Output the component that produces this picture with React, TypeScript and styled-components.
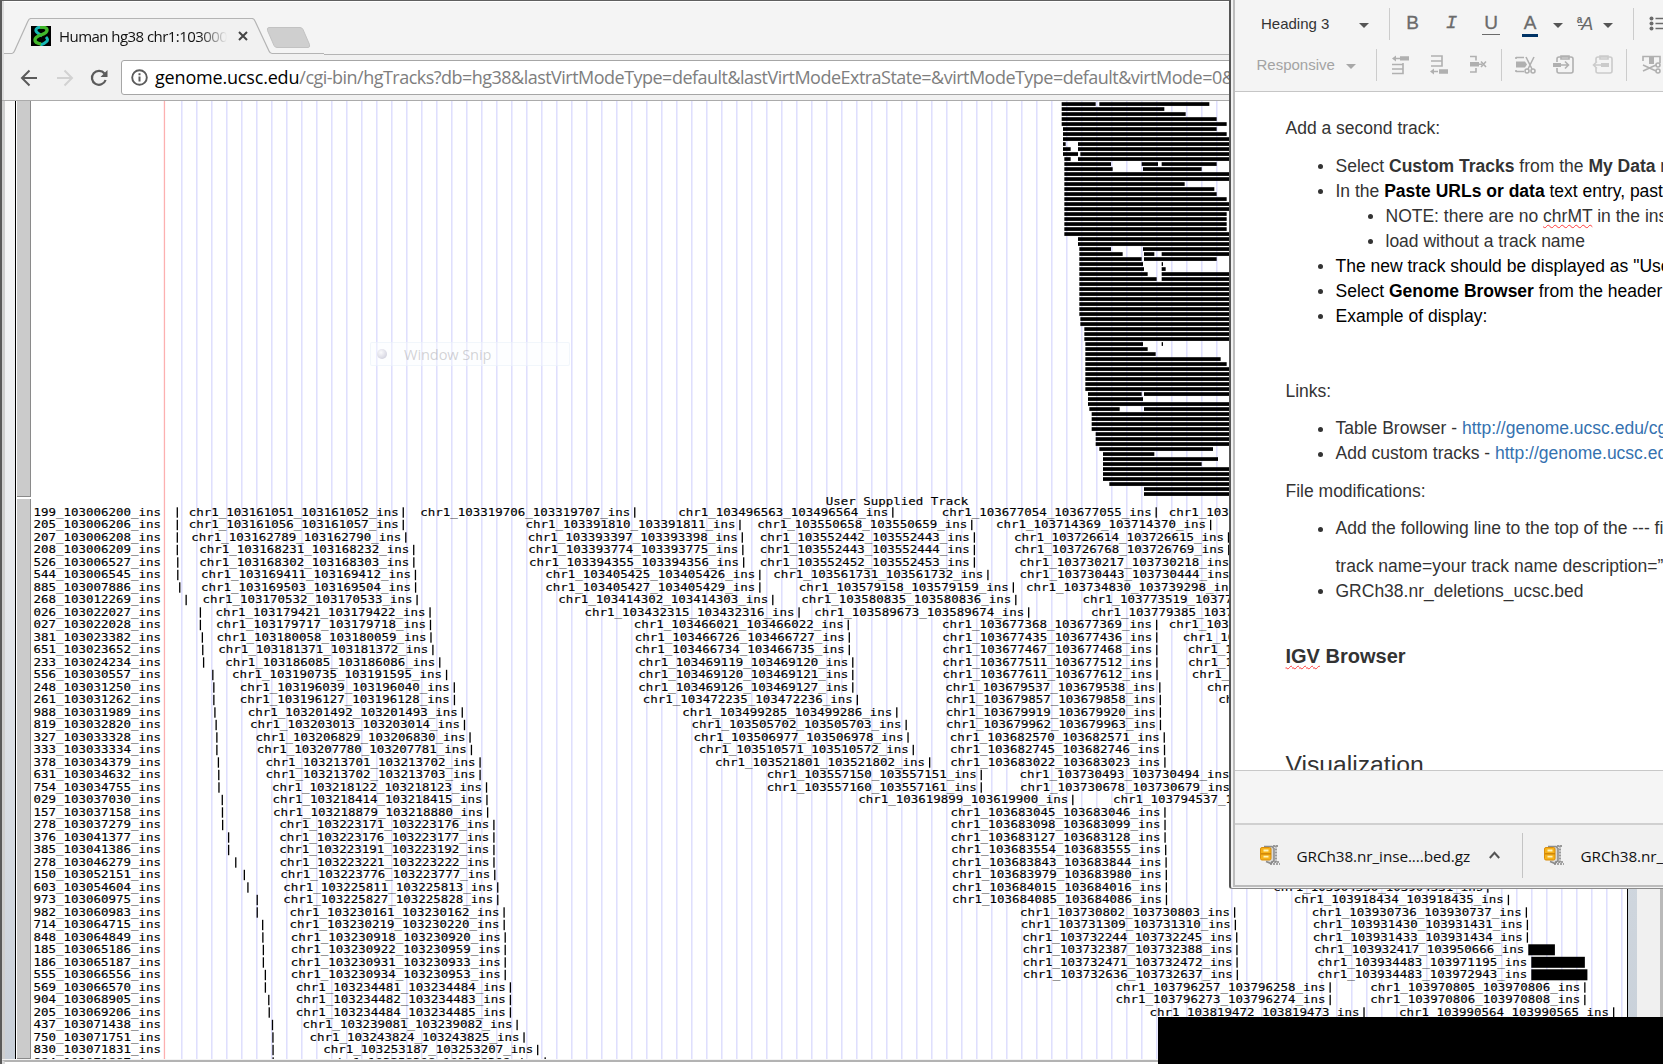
import React from 'react';
import styled, { createGlobalStyle } from 'styled-components';

const UI = '"Open Sans", "Noto Sans", sans-serif';
const ARIAL = '"Liberation Sans", Arial, sans-serif';

const GlobalStyle = createGlobalStyle`
  * { box-sizing: border-box; }
  html, body { margin: 0; padding: 0; overflow: hidden; background: #fff; }
`;

const Desktop = styled.div`
  position: relative;
  width: 1663px;
  height: 1064px;
  overflow: hidden;
  background: #f4f4f4;
`;

/* ---------- browser window ---------- */

const BrowserWindow = styled.section`
  position: absolute;
  inset: 0;
  display: flex;
  flex-direction: column;
  background: #f4f4f4;
  border-left: 2px solid #5a5a5a;
  border-top: 1px solid #5f5f5f;
`;

const TabStrip = styled.div`
  height: 54px;
  flex: none;
  display: flex;
  align-items: flex-end;
  box-shadow: inset 2px 0 #dcdcdc, inset 0 1px #fff;
`;

const TabArea = styled.div`
  position: relative;
  width: 320px;
  height: 37px;
  margin-left: 2px;
`;

const TabShape = styled.svg`
  position: absolute;
  left: 0;
  top: 0;
`;

const TabContent = styled.div`
  position: relative;
  display: flex;
  align-items: center;
  height: 36px;
  padding-left: 27px;
`;

const TabTitle = styled.span`
  width: 169px;
  margin-left: 8px;
  overflow: hidden;
  white-space: nowrap;
  font: 15px/22px ${UI};
  letter-spacing: -0.55px;
  color: #111;
  mask-image: linear-gradient(to right, #000 140px, transparent 168px);
`;

const StripLine = styled.div`
  flex: 1;
  height: 1px;
  background: #b4b4b4;
`;

const Toolbar = styled.div`
  height: 46px;
  flex: none;
  display: flex;
  align-items: center;
  padding-left: 18px;
  background: #f1f1f1;
  border-bottom: 1px solid #ababab;
  box-shadow: inset 2px 0 #dcdcdc;
`;

const NavIcon = styled.svg<{ $gap: number }>`
  flex: none;
  margin-right: ${p => p.$gap}px;
`;

const Omnibox = styled.div`
  flex: 1;
  height: 35px;
  display: flex;
  align-items: center;
  padding-left: 9px;
  background: #fff;
  border: 1px solid #a6a6a6;
  border-radius: 3px;
  overflow: hidden;
`;

const Url = styled.span`
  margin-left: 7px;
  margin-top: -1px;
  white-space: nowrap;
  font: 18px/28px ${UI};
  letter-spacing: -0.52px;
  color: #7e7e7e;
  b { font-weight: 400; color: #000; letter-spacing: -0.18px; }
`;

const Page = styled.div`
  flex: 1;
  min-height: 0;
  display: flex;
  border-bottom: 1px solid #f4f4f4;
`;

const PageLeft = styled.div`
  width: 13px;
  background: linear-gradient(#fafafa, #e9ebee 45%, #c8cfd8);
  border-left: 3px solid #cfcfcf;
`;

const Handles = styled.div`
  width: 16px;
  display: flex;
  flex-direction: column;
  gap: 2px;
  border-left: 1px solid #000;
  padding-left: 1px;
  background: #fff;
`;

const Handle = styled.div<{ $height?: number }>`
  ${p => (p.$height ? `height: ${p.$height}px;` : 'flex: 1;')}
  background: #cbcbcb;
  border-right: 1px solid #8a8a8a;
  border-bottom: 1px solid #8a8a8a;
`;

const Plot = styled.svg`
  display: block;
  flex: none;
  background: #fff;
`;

const PageRight = styled.div`
  width: 10px;
  border-left: 1px solid #000;
  background: linear-gradient(#eef0f2, #c8d0d9);
`;

const ScrollTrack = styled.div`
  flex: 1;
  background: #f0f0f0;
  border-right: 3px solid #b9b9b9;
`;

const WindowFoot = styled.div`
  height: 4px;
  flex: none;
  background: #fff;
  border-top: 2px solid #b3b3b3;
  border-left: 3px solid #dcdcdc;
`;

const Label = styled.text`
  font-family: "DejaVu Sans Mono", monospace;
  font-size: 10.6px;
  fill: #000;
  stroke: #000;
  stroke-width: 0.15px;
`;

/* ---------- genome data ---------- */

const SLOPE = 0.0014592;
const toX = (pos: number) => 403.3 + (pos - 161052) * SLOPE;
const rowY = (row: number) => 511.9 + row * 12.5;

const LEFT: [string, number][] = [
  ['199', 6200], ['205', 6206], ['207', 6208], ['208', 6209], ['526', 6527], ['544', 6545],
  ['885', 7886], ['268', 12269], ['026', 22027], ['027', 22028], ['381', 23382], ['651', 23652],
  ['233', 24234], ['556', 30557], ['248', 31250], ['261', 31262], ['988', 31989], ['819', 32820],
  ['327', 33328], ['333', 33334], ['378', 34379], ['631', 34632], ['754', 34755], ['029', 37030],
  ['157', 37158], ['278', 37279], ['376', 41377], ['385', 41386], ['278', 46279], ['150', 52151],
  ['603', 54604], ['973', 60975], ['982', 60983], ['714', 64715], ['848', 64849], ['185', 65186],
  ['186', 65187], ['555', 66556], ['569', 66570], ['904', 68905], ['205', 69206], ['437', 71438],
  ['750', 71751], ['830', 71831], ['884', 71887],
];

/* Each stack begins at a row; entries are start positions, or [start, end]. */
type Entry = number | [number, number];
const STACKS: { row: number; items: Entry[] }[] = [
  {
    row: 0,
    items: [
      161051, 161056, 162789, 168231, 168302, 169411, 169503, 170532, 179421, 179717, 180058,
      181371, 186085, [190735, 191595], 196039, 196127, [201492, 201493], 203013, 206829, 207780,
      213701, 213702, 218122, 218414, 218879, [223171, 223176], 223176, 223191, 223221, 223776,
      [225811, 225813], 225827, 230161, 230219, [230918, 230920], [230922, 230959],
      [230931, 230933], [230934, 230953], [234481, 234484], 234482, 234484, 239081, 243824,
      [253187, 253207], 258308,
    ],
  },
  {
    row: 0,
    items: [
      319706, 391810, 393397, 393774, 394355, 405425, [405427, 405429], 414302, 432315, 466021,
      466726, 466734, 469119, 469120, 469126, 472235, 499285, 505702, 506977, 510571, 521801,
      557150, 557160, 619899, 683045, 683098, 683127, 683554, 683843, 683979, 684015, 684085,
      730802, 731309, 732244, 732387, 732471, 732636, [796257, 796258], 796273, 819472,
    ],
  },
  {
    row: 0,
    items: [496563, 550658, 552442, 552443, 552452, 561731, 579158, 580835, 589673, 677368, 677435,
      677467, 677511, 677611, 679537, 679857, 679919, 679962, 682570, 682745, 683022, 730493,
      730678, 794537],
  },
  { row: 0, items: [677054, 714369, 726614, 726768, 730217, 730443, [734830, 739298], 773519, 779385] },
  { row: 0, items: [832651] },
  { row: 9, items: [832700, 842300, 845800, 845900, 848500, 858800, 866700] },
  { row: 30, items: [904330, 918434, 930736, 931430, 931433] },
  { row: 35, items: [[932417, 950666], [934483, 971195], [934483, 972943]] },
  { row: 38, items: [970805, [970806, 970808], 990564] },
];

/* Solid alignments of the upper track: thirds of a pixel from x = 1040. */
const E = 600;
const rep = (n: number, ...segs: number[][]) => Array.from({ length: n }, () => segs);
const BARS: number[][][] = [
  [[65, 167], [178, 508]], [[65, 373]], [[65, 437]], [[65, 530]], [[65, 560]], [[69, 530]],
  [[69, 560]], [[69, E]], [[69, 77], [114, E]], [[69, 92], [114, E]], [[69, 114], [121, E]],
  [[73, 92], [114, E]], [[73, 213], [305, 354], [365, 530]], [[73, 218], [309, 485]],
  ...rep(2, [73, E]), [[73, 434]], [[73, 523]], [[73, 530]], [[73, 560]], ...rep(2, [73, E]),
  ...rep(4, [73, 560]), [[73, E]], ...rep(2, [114, E]), [[118, 213], [309, E]],
  [[118, 248], [312, 343], [365, E]], [[118, 305], [312, 530]], [[118, 309], [365, 369]],
  [[118, 312], [365, 377]], [[118, 323], [365, E]], [[118, 350], [365, E]],
  ...rep(7, [118, E]), ...rep(2, [121, E]), ...rep(3, [133, E]), [[136, 309], [365, 369]],
  [[136, 323]], [[136, 347]], [[136, 542]], [[136, 560]], ...rep(5, [136, E]),
  [[144, 305], [312, E]], [[144, 309]], [[144, E]], [[148, 239], [312, E]], ...rep(4, [155, E]),
  ...rep(3, [167, E]), [[178, 519]], [[189, 343]], [[189, 534]], [[189, 485]],
  ...rep(3, [189, E]), [[208, E]], ...rep(2, [312, E]),
];

function Feature({ row, entry }: { row: number; entry: Entry }) {
  const [start, end] = Array.isArray(entry) ? entry : [entry, entry + 1];
  const x = toX(start);
  const w = (end - start) * SLOPE;
  const wide = w > 10;
  return (
    <>
      <Label x={x - 214.6} y={rowY(row) + 3.9} textLength={210} lengthAdjust="spacingAndGlyphs">
        {`chr1_103${start}_103${end}_ins`}
      </Label>
      {wide
        ? <rect x={x - 0.6} y={rowY(row) - 5.1} width={w} height={11} />
        : <rect x={x - 0.7} y={rowY(row) - 4.6} width={1.3} height={10.4} />}
    </>
  );
}

function GenomePlot() {
  return (
    <Plot width={1596} height={958} viewBox="31 101 1596 958">
      {Array.from({ length: 97 }, (_, i) => (
        <rect key={i} x={181.1 + i * 15} y={101} width={1.4} height={958} fill="#dcdcfd" />
      ))}
      <rect x={163.8} y={101} width={1.3} height={958} fill="#fcb0b0" />
      {BARS.map((segs, i) => segs.map(([a, b]) => (
        <rect key={`${i}-${a}`} x={1040 + a / 3} y={102.2 + i * 5} width={(b - a) / 3} height={3.7} />
      )))}
      <Label x={825.8} y={504.6} textLength={142.5} lengthAdjust="spacingAndGlyphs">
        User Supplied Track
      </Label>
      {LEFT.map(([head, pos], i) => {
        const p = String(pos).padStart(6, '0');
        return (
          <React.Fragment key={i}>
            <Label x={33.6} y={rowY(i) + 3.9} textLength={127.5} lengthAdjust="spacingAndGlyphs">
              {`${head}_103${p}_ins`}
            </Label>
            <rect x={toX(pos) - 0.7} y={rowY(i) - 4.6} width={1.3} height={10.4} />
          </React.Fragment>
        );
      })}
      {STACKS.map((s, si) => s.items.map((entry, i) => (
        <Feature key={`${si}-${i}`} row={s.row + i} entry={entry} />
      )))}
    </Plot>
  );
}

/* ---------- fading menu ---------- */

const GhostMenu = styled.div`
  position: absolute;
  left: 370px;
  top: 342px;
  width: 200px;
  height: 24px;
  display: flex;
  align-items: center;
  padding-left: 6px;
  border: 1px solid rgba(230, 238, 248, 0.5);
  border-radius: 2px;
  background: rgba(250, 252, 255, 0.45);
  font: 14.6px/22px ${UI};
  letter-spacing: -0.1px;
  color: rgba(150, 150, 155, 0.42);
`;

const GhostDot = styled.span`
  width: 10px;
  height: 10px;
  margin-right: 17px;
  border-radius: 50%;
  background: radial-gradient(circle at 40% 35%, #fafafc, #dcdce6 60%, #c4c4d2);
`;

/* ---------- document window ---------- */

const DocWindow = styled.section`
  position: absolute;
  left: 1229px;
  top: 0;
  width: 434px;
  height: 889px;
  display: flex;
  flex-direction: column;
  background: #f2f2f2;
  border-left: 2px solid #555;
  border-bottom: 1px solid #8c8c8c;
  border-bottom-left-radius: 3px;
  overflow: hidden;
`;

const DocFrame = styled.div`
  flex: 1;
  min-height: 0;
  display: flex;
  flex-direction: column;
  margin-left: 2px;
  border-left: 2px solid #bcbcbc;
  border-bottom: 2px solid #bcbcbc;
  margin-bottom: 1px;
`;

const EditorBar = styled.div`
  height: 92px;
  flex: none;
  display: flex;
  flex-direction: column;
  gap: 9px;
  padding-top: 8px;
  background: #f4f4f4;
  border-bottom: 1px solid #c6c6c6;
`;

const BarRow = styled.div<{ $indent: number }>`
  height: 32px;
  display: flex;
  align-items: center;
  padding-left: ${p => p.$indent}px;
`;

const Picker = styled.span<{ $width: number; $muted?: boolean }>`
  flex: none;
  width: ${p => p.$width}px;
  font: 15px/20px ${ARIAL};
  color: ${p => (p.$muted ? '#a3a3a3' : '#333')};
`;

const Slot = styled.span<{ $width: number }>`
  flex: none;
  width: ${p => p.$width}px;
  display: flex;
  justify-content: center;
`;

const Caret = styled.i<{ $muted?: boolean }>`
  margin-top: 2px;
  border: 5px solid transparent;
  border-top-color: ${p => (p.$muted ? '#a8a8a8' : '#555')};
  border-bottom: 0;
`;

const Divider = styled.span<{ $before: number; $after: number }>`
  flex: none;
  width: 1px;
  height: 32px;
  margin: 0 ${p => p.$after}px 0 ${p => p.$before}px;
  background: #ccc;
`;

const Letter = styled.span<{ $italic?: boolean; $line?: string }>`
  height: 22px;
  padding: 0 2px;
  font: ${p => (p.$italic ? 'italic' : 'normal')} 19px/20px ${p => (p.$italic ? '"Liberation Mono", monospace' : ARIAL)};
  color: #6b6b6b;
  -webkit-text-stroke: 0.3px #6b6b6b;
  border-bottom: ${p => p.$line || '0'};
`;

const ColorLetter = styled(Letter)`
  height: 25px;
  margin-top: 1px;
  line-height: 21px;
  border-bottom: 3px solid #003366;
`;

const Shift = styled.span`
  display: flex;
  align-items: center;
  font: italic 18px/20px ${ARIAL};
  color: #6b6b6b;
`;

const Raised = styled.span`
  margin-top: -9px;
  font: bold 10px/10px ${ARIAL};
`;

const Dash = styled.span`
  width: 6px;
  height: 1px;
  margin: 2px -3px 0 -4px;
  background: #6b6b6b;
`;

const Glyph = styled.svg<{ $gap?: number }>`
  flex: none;
  margin-right: ${p => p.$gap || 0}px;
`;

const Doc = styled.div`
  height: 678px;
  flex: none;
  padding: 24px 0 0 50.5px;
  overflow: hidden;
  background: #fff;
  font: 17.5px/25px ${ARIAL};
  color: #333;
  white-space: nowrap;
  p { margin: 0 0 12.5px; min-height: 25px; }
`;

const List = styled.ul<{ $nested?: boolean }>`
  margin: 0 0 ${p => (p.$nested ? 0 : 12.5)}px;
  padding-left: 50px;
  list-style: none;
`;

const Item = styled.li<{ $dark?: boolean }>`
  color: ${p => (p.$dark ? '#000' : '#333')};
  &::before {
    content: '';
    display: inline-block;
    width: 5px;
    height: 5px;
    margin: 0 12.5px 2.5px -17.5px;
    border-radius: 50%;
    background: #333;
  }
  p { margin: 12.5px 0 0; }
`;

const Dark = styled.span` color: #000; `;
const Link = styled.a` color: #3572b0; `;
const Misspelt = styled.span`
  text-decoration: underline wavy #ff3b3b 1px;
  text-underline-offset: 2px;
  text-decoration-skip-ink: none;
`;
const Heading = styled.h3`
  margin: 40.5px 0 80px;
  font: bold 20px/25px ${ARIAL};
`;
const Title = styled.h2`
  margin: 0;
  font: 24.7px/31px ${ARIAL};
`;

const StatusStrip = styled.div`
  height: 55px;
  flex: none;
  background: #f5f5f5;
  border-top: 1px solid #c8c8c8;
  border-bottom: 2px solid #d0d0d0;
`;

const Downloads = styled.div`
  flex: 1;
  display: flex;
  align-items: center;
  padding-left: 25px;
  background: #f1f1f1;
`;

const FileName = styled.span<{ $width: number }>`
  flex: none;
  width: ${p => p.$width}px;
  margin-left: 15.5px;
  margin-top: 2px;
  white-space: nowrap;
  font: 15.3px/22px ${UI};
  letter-spacing: -0.08px;
  color: #111;
`;

const FileDivider = styled.span`
  flex: none;
  width: 1px;
  height: 45px;
  margin: 0 21px 0 22.5px;
  background: #c4c4c4;
`;

const BlackBox = styled.div`
  position: absolute;
  left: 1158px;
  top: 1017px;
  width: 505px;
  height: 47px;
  background: #000;
`;

function ZipIcon() {
  return (
    <Glyph width="21" height="22" viewBox="0 0 21 22">
      <path d="M4 2.5h8l2 2v12l-3 3-5-2" fill="#d9d9d9" stroke="#8c8c8c" strokeWidth="1.6" />
      <path d="M16 1.5v17M13 2h6" fill="none" stroke="#999" strokeWidth="2" strokeDasharray="2 1" />
      <path d="M10 20h10M11 18h9" stroke="#888" strokeWidth="1.6" strokeDasharray="2 1" />
      <rect x=".5" y="3.5" width="10.5" height="12.5" rx="1.5" fill="#f6b21b" stroke="#d98e0b" />
      <path d="M1 9.8h10" stroke="#c77c06" strokeWidth="1.2" />
      <path d="M3.5 6.5h5M3.5 12.7h5" stroke="#fff3b8" strokeWidth="1.8" />
    </Glyph>
  );
}

function EditorToolbar() {
  const s = { fill: 'none', stroke: '#b0b0b0', strokeWidth: 1.6 };
  return (
    <EditorBar>
      <BarRow $indent={26}>
        <Picker $width={98}>Heading 3</Picker>
        <Slot $width={10}><Caret /></Slot>
        <Divider $before={20} $after={3} />
        <Slot $width={39}><Letter>B</Letter></Slot>
        <Slot $width={39}><Letter $italic>I</Letter></Slot>
        <Slot $width={40}><Letter $line="1px solid #6b6b6b">U</Letter></Slot>
        <Slot $width={38}><ColorLetter>A</ColorLetter></Slot>
        <Slot $width={18}><Caret /></Slot>
        <Slot $width={36}><Shift><Raised>a</Raised><Dash />A</Shift></Slot>
        <Slot $width={10}><Caret /></Slot>
        <Divider $before={20} $after={15} />
        <Glyph width="24" height="16" viewBox="0 0 24 16">
          <g fill="#6b6b6b"><circle cx="2.500" cy="2.500" r="2" /><circle cx="2.500" cy="7.500" r="2" /><circle cx="2.500" cy="12.500" r="2" /></g>
          <path d="M6.500 2.500h17M6.500 7.500h17M6.500 12.500h17" stroke="#6b6b6b" strokeWidth="1.600" />
        </Glyph>
      </BarRow>
      <BarRow $indent={21.5}>
        <Picker $width={89.5} $muted>Responsive</Picker>
        <Slot $width={10}><Caret $muted /></Slot>
        <Divider $before={20} $after={14} />
        <Glyph $gap={18} width="20" height="20" viewBox="0 0 20 20">
          <path d="M1 9.5h11v9H1M1 14h11M12 9.5V8M4 3.5h5" {...s} />
          <path d="M1 3.5 5 .5v6zM9 1.2h9v4.3H9z" fill="#b0b0b0" />
        </Glyph>
        <Glyph $gap={20} width="20" height="20" viewBox="0 0 20 20">
          <path d="M2 1h11v10H2M2 6h11M4 16.5h5" {...s} />
          <path d="m1 16.5 4-3v6zM10 14.3h9v4.4h-9z" fill="#b0b0b0" />
        </Glyph>
        <Glyph $gap={12} width="20" height="20" viewBox="0 0 20 20">
          <path d="M1 1.5h6v4M1 17h6v-4M12 6.500l5 5.500M17 6.500l-5 5.500" {...s} />
          <path d="M1 7h9v4.500H1zM9 8.500h4v1.500H9z" fill="#b0b0b0" />
        </Glyph>
        <Divider $before={0} $after={13} />
        <Glyph $gap={17} width="21" height="20" viewBox="0 0 21 20">
          <path d="M1 2.5h8M1 16.5h8M1 2v2M1 15v2M11 2l6 12M19 2l-6 12" {...s} />
          <circle cx="12" cy="16" r="2" {...s} /><circle cx="18" cy="16" r="2" {...s} />
          <path d="M1 6.5h9l2 3-2 3H1z" fill="#b0b0b0" />
        </Glyph>
        <Glyph $gap={17} width="22" height="20" viewBox="0 0 22 20">
          <path d="M4 7V4q0-2 2-2h12q2 0 2 2v12q0 2-2 2H6q-2 0-2-2v-3M8 3V1h8v3H8zM8 10h7M12 6.5l3.5 3.5-3.5 3.5" {...s} />
          <path d="M0 8h8v4H0z" fill="#b0b0b0" />
        </Glyph>
        <Glyph $gap={12} width="22" height="20" viewBox="0 0 22 20" opacity=".6">
          <path d="M4 7V4q0-2 2-2h12q2 0 2 2v12q0 2-2 2H6q-2 0-2-2v-3M8 3V1h8v3H8zM2 10h8M5 6.5 1.5 10 5 13.5" {...s} />
          <path d="M9 8h8v4H9z" fill="#b0b0b0" />
        </Glyph>
        <Divider $before={0} $after={15} />
        <Glyph width="21" height="20" viewBox="0 0 21 20">
          <path d="M1 6V1.5h17V8M1 10l13 6M1 16l13-6" {...s} />
          <circle cx="16" cy="10" r="2" {...s} /><circle cx="16" cy="16" r="2" {...s} />
          <path d="M7 1h5v8H7z" fill="#b0b0b0" />
        </Glyph>
      </BarRow>
    </EditorBar>
  );
}

export default function App() {
  return (
    <Desktop>
      <GlobalStyle />
      <BrowserWindow>
        <TabStrip>
          <TabArea>
            <TabShape width="320" height="37" viewBox="4 19 320 37">
              <path d="M4 54.5h9.5L28 22q1-2.5 3-2.5h221q2 0 3 2.5l14 30q1 2.5 3 2.5h52V57H4z" fill="#f1f1f1" />
              <path d="M4 54.5h8q1.500 0 2.500-2.500L28 22q1-2.500 3-2.500h221q2 0 3 2.500l14 30q1 2.500 3 2.500h52" fill="none" stroke="#b4b4b4" strokeWidth="1.2" />
              <path d="M269 28.500h31q2 0 3 2l6.500 15q.8 3-1.500 3h-31q-2 0-3-2l-6.500-15q-.8-3 1.500-3z" fill="#cfcfcf" stroke="#c2c2c2" />
            </TabShape>
            <TabContent>
              <NavIcon $gap={0} width="20" height="20" viewBox="0 0 20 20">
                <rect width="20" height="20" />
                <path d="M12 1Q4 1 5 5q1 2 6 5" fill="none" stroke="#17b9b5" strokeWidth="3" />
                <path d="M15 11q3 3 0 5-2 2-6 3" fill="none" stroke="#17b9b5" strokeWidth="3" />
                <path d="M9 1q7 0 7 3t-6 5q-6 2-6 5t6 4" fill="none" stroke="#42b82b" strokeWidth="3.400" />
              </NavIcon>
              <TabTitle>Human hg38 chr1:103000</TabTitle>
              <NavIcon $gap={0} width="24" height="12" viewBox="0 0 24 12">
                <path d="M11 2l8 8M19 2l-8 8" stroke="#444" strokeWidth="2" />
              </NavIcon>
            </TabContent>
          </TabArea>
          <StripLine />
        </TabStrip>
        <Toolbar>
          <NavIcon $gap={18} width="18" height="18" viewBox="0 0 18 18">
            <path d="M17 9H2M9.500 1.500 2 9l7.500 7.500" fill="none" stroke="#5b5b5b" strokeWidth="2" />
          </NavIcon>
          <NavIcon $gap={16} width="18" height="18" viewBox="0 0 18 18">
            <path d="M1 9h15M8.500 1.500 16 9l-7.500 7.500" fill="none" stroke="#d2d2d2" strokeWidth="2" />
          </NavIcon>
          <NavIcon $gap={13} width="18" height="18" viewBox="0 0 18 18">
            <path d="M14.500 4.500A7 7 0 1 0 15.600 11" fill="none" stroke="#5b5b5b" strokeWidth="2.200" />
            <path d="M17.500 1v7h-7z" fill="#5b5b5b" />
          </NavIcon>
          <Omnibox>
            <NavIcon $gap={0} width="17" height="17" viewBox="0 0 17 17">
              <circle cx="8.500" cy="8.500" r="7.300" fill="none" stroke="#5b5b5b" strokeWidth="1.900" />
              <path d="M8.500 7.500v5M8.500 4.200v2" stroke="#5b5b5b" strokeWidth="2" />
            </NavIcon>
            <Url>
              <b>genome.ucsc.edu</b>/cgi-bin/hgTracks?db=hg38&amp;lastVirtModeType=default&amp;lastVirtModeExtraState=&amp;virtModeType=default&amp;virtMode=0&amp;
            </Url>
          </Omnibox>
        </Toolbar>
        <Page>
          <PageLeft />
          <Handles>
            <Handle $height={396} />
            <Handle />
          </Handles>
          <GenomePlot />
          <PageRight />
          <ScrollTrack />
        </Page>
        <WindowFoot />
      </BrowserWindow>

      <GhostMenu><GhostDot />Window Snip</GhostMenu>

      <DocWindow>
        <DocFrame>
          <EditorToolbar />
          <Doc>
            <p>Add a second track:</p>
            <List>
              <Item>Select <b>Custom Tracks</b> from the <b>My Data</b> menu</Item>
              <Item>In the <Dark><b>Paste URLs or data</b> text entry, paste</Dark></Item>
              <List $nested>
                <Item>NOTE: there are no <Misspelt>chrMT</Misspelt> in the ins</Item>
                <Item>load without a track name</Item>
              </List>
              <Item $dark>The new track should be displayed as "User</Item>
              <Item $dark>Select <b>Genome Browser</b> from the header</Item>
              <Item $dark>Example of display:</Item>
            </List>
            <p />
            <p>Links:</p>
            <List>
              <Item>Table Browser - <Link>http://genome.ucsc.edu/cgi</Link></Item>
              <Item>Add custom tracks - <Link>http://genome.ucsc.edu</Link></Item>
            </List>
            <p>File modifications:</p>
            <List>
              <Item>Add the following line to the top of the --- file<p>track name=your track name description=”</p></Item>
              <Item>GRCh38.nr_deletions_ucsc.bed</Item>
            </List>
            <Heading><Misspelt>IGV</Misspelt> Browser</Heading>
            <Title>Visualization</Title>
          </Doc>
          <StatusStrip />
          <Downloads>
            <ZipIcon />
            <FileName $width={192}>GRCh38.nr_inse....bed.gz</FileName>
            <Glyph width="11" height="8" viewBox="0 0 11 8">
              <path d="m.8 7 4.700-5.200L10.200 7" fill="none" stroke="#555" strokeWidth="2" />
            </Glyph>
            <FileDivider />
            <ZipIcon />
            <FileName $width={100}>GRCh38.nr_</FileName>
          </Downloads>
        </DocFrame>
      </DocWindow>

      <BlackBox />
    </Desktop>
  );
}
